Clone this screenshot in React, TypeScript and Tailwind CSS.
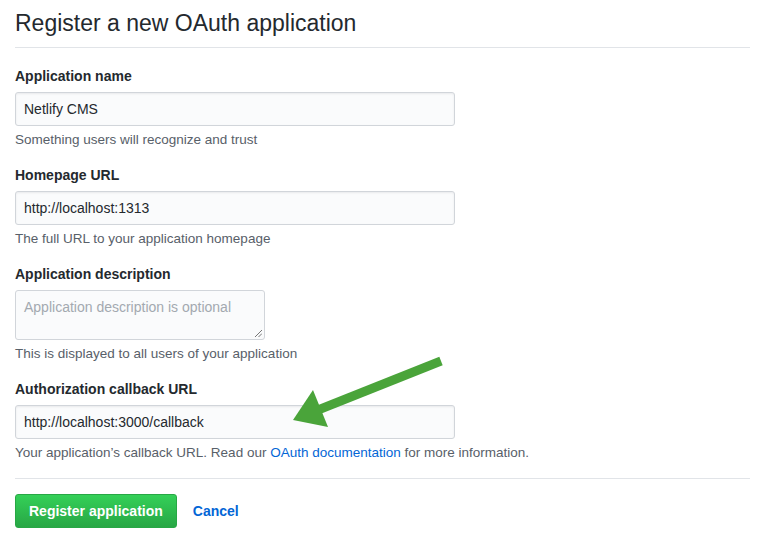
import React from 'react'

const font = { fontFamily: '"Liberation Sans", Arial, sans-serif' }

function Field({ label, children, note }: { label: string; children: React.ReactNode; note: React.ReactNode }) {
  return (
    <div className="mb-[16px]">
      <div className="text-[14px] leading-[20px] font-bold text-[#24292e] mb-[6px]">{label}</div>
      {children}
      <div className="text-[13.5px] leading-[18px] text-[#586069] mt-[5px]">{note}</div>
    </div>
  )
}

function TextInput({ value }: { value: string }) {
  return (
    <div className="w-[440px] h-[34px] rounded-[3px] border border-[#d1d5da] bg-[#fafbfc] shadow-[inset_0_1px_2px_rgba(27,31,35,0.075)] px-[8px] flex items-center text-[14px] text-[#24292e]">
      {value}
    </div>
  )
}

function Arrow() {
  return (
    <svg className="absolute left-0 top-0 pointer-events-none" width="759" height="538">
      <line x1="441" y1="361" x2="318" y2="410" stroke="#4aa43a" strokeWidth="9" />
      <polygon points="293,420 313,390 328,427" fill="#4aa43a" />
    </svg>
  )
}

export default function App() {
  return (
    <div className="relative w-[759px] h-[538px] bg-white overflow-hidden" style={font}>
      <div className="pl-[15px] pr-[9px] pt-[6px]">
        <h1 className="text-[23px] leading-[34px] text-[#24292e] font-normal pb-[7px] border-b border-[#e1e4e8] mb-[18px]">
          Register a new OAuth application
        </h1>
        <Field label="Application name" note="Something users will recognize and trust">
          <TextInput value="Netlify CMS" />
        </Field>
        <Field label="Homepage URL" note="The full URL to your application homepage">
          <TextInput value="http://localhost:1313" />
        </Field>
        <Field label="Application description" note="This is displayed to all users of your application">
          <div className="relative w-[250px] h-[50px] rounded-[3px] border border-[#d1d5da] bg-[#fafbfc] px-[8px] pt-[6px] text-[14px] text-[#a3a9b0]">
            Application description is optional
            <svg className="absolute right-[2px] bottom-[2px]" width="7" height="7">
              <line x1="0" y1="7" x2="7" y2="0" stroke="#777" strokeWidth="1" />
              <line x1="3.5" y1="7" x2="7" y2="3.5" stroke="#777" strokeWidth="1" />
            </svg>
          </div>
        </Field>
        <Field
          label="Authorization callback URL"
          note={
            <>
              Your application’s callback URL. Read our <span className="text-[#0366d6]">OAuth documentation</span> for more information.
            </>
          }
        >
          <TextInput value="http://localhost:3000/callback" />
        </Field>
        <div className="border-t border-[#e1e4e8] pt-[15px] flex items-center">
          <div className="h-[34px] px-[13px] rounded-[3px] border border-[#28a745] bg-gradient-to-b from-[#34d058] to-[#28a745] text-white text-[14px] font-bold flex items-center">
            Register application
          </div>
          <span className="ml-[16px] text-[14px] font-bold text-[#0366d6]">Cancel</span>
        </div>
      </div>
      <Arrow />
    </div>
  )
}
